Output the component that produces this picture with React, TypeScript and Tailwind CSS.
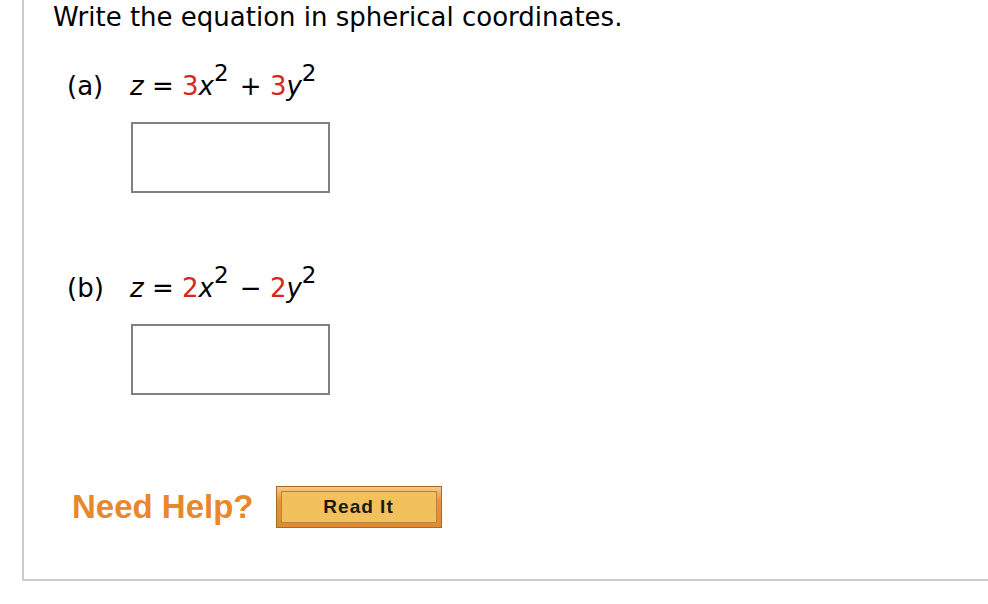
import React from "react";

function InputBox() {
  return <div className="w-[199px] h-[71px] border-2 border-[#808080] bg-white" />;
}

const red = "text-[#d42a1e]";

export default function App() {
  const font = { fontFamily: '"DejaVu Sans", Verdana, sans-serif' };
  const arial = { fontFamily: '"Liberation Sans", Arial, sans-serif' };
  return (
    <div className="w-[988px] h-[604px] bg-white overflow-hidden">
      <div className="ml-[22px] h-[581px] border-l-2 border-b-2 border-[#cccccc] pl-[29px] flex flex-col text-black" style={font}>
        <div className="text-[26px] leading-[34px]">Write the equation in spherical coordinates.</div>

        <div className="mt-[35px] ml-[14px] text-[26px] leading-[34px] flex">
          <span className="w-[63px]">(a)</span>
          <span>
            <i>z</i> = <span className={red}>3</span><i>x</i><sup className="text-[23px] -top-[0.6em]">2</sup><span className="ml-[3px]"> + </span><span className={red}>3</span><i>y</i><sup className="text-[23px] -top-[0.6em]">2</sup>
          </span>
        </div>

        <div className="mt-[19px] ml-[78px]">
          <InputBox />
        </div>

        <div className="mt-[78px] ml-[14px] text-[26px] leading-[34px] flex">
          <span className="w-[63px]">(b)</span>
          <span>
            <i>z</i> = <span className={red}>2</span><i>x</i><sup className="text-[23px] -top-[0.6em]">2</sup><span className="ml-[3px]"> − </span><span className={red}>2</span><i>y</i><sup className="text-[23px] -top-[0.6em]">2</sup>
          </span>
        </div>

        <div className="mt-[19px] ml-[78px]">
          <InputBox />
        </div>

        <div className="mt-[91px] ml-[19px] flex items-center gap-[22px]">
          <span className="text-[33px] leading-[40px] font-bold text-[#e8882c]" style={arial}>Need Help?</span>
          <button className="w-[166px] h-[42px] border border-[#a36b2c] bg-[linear-gradient(#f6c98a,#e8923a_35%,#e08a34)] p-[4px] flex">
            <span className="flex-1 border border-[#b4853f] bg-[#f3c15c] flex items-center justify-center text-[19px] tracking-[1px] font-bold text-[#1a1a1a]" style={arial}>Read It</span>
          </button>
        </div>
      </div>
    </div>
  );
}
